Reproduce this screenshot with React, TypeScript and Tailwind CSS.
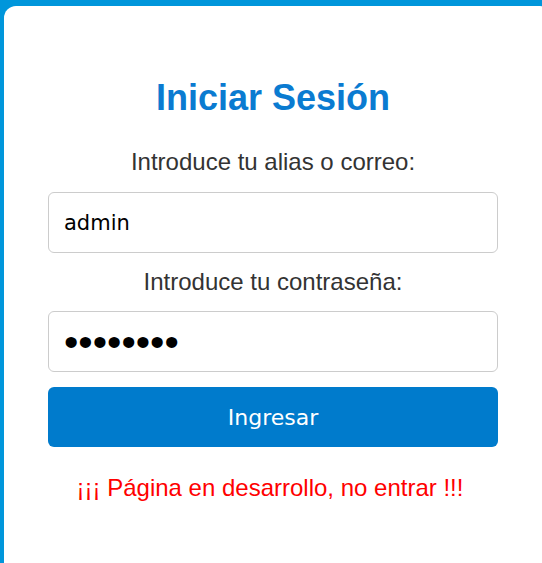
import React from "react";

export default function App() {
  return (
    <div className="w-[542px] h-[563px] overflow-hidden bg-[#0096db] pl-[4px] pt-[6px]">
      <div className="w-[548px] h-[580px] bg-white rounded-[12px] px-[44px] pt-[70px]">
        <div className="w-[450px] flex flex-col items-center font-['Liberation_Sans',Arial,sans-serif]">
          <h1 className="text-[36px] font-bold text-[#0a7bd1] leading-[44px]">Iniciar Sesión</h1>
          <label className="mt-[28px] text-[24px] leading-[28px] text-[#333333]">Introduce tu alias o correo:</label>
          <input
            type="text"
            defaultValue="admin"
            className="mt-[16px] w-full h-[61px] border border-[#cccccc] rounded-[6px] px-[15px] text-[21px] text-black outline-none font-['DejaVu_Sans',Tahoma,sans-serif]"
          />
          <label className="mt-[15px] text-[24px] leading-[28px] text-[#333333]">Introduce tu contraseña:</label>
          <input
            type="password"
            defaultValue="12345678"
            className="mt-[15px] w-full h-[61px] border border-[#cccccc] rounded-[6px] pl-[15px] pr-[15px] pt-[2px] text-[41px] leading-[normal] text-black outline-none font-['Liberation_Sans',Arial,sans-serif]"
          />
          <button className="mt-[15px] w-full h-[60px] bg-[#007bcc] rounded-[6px] text-white text-[22px] font-['DejaVu_Sans',Tahoma,sans-serif]">
            Ingresar
          </button>
          <p className="mt-[27px] -ml-[6px] text-[24px] leading-[28px] text-[#ff0000]">¡¡¡ Página en desarrollo, no entrar !!!</p>
        </div>
      </div>
    </div>
  );
}
